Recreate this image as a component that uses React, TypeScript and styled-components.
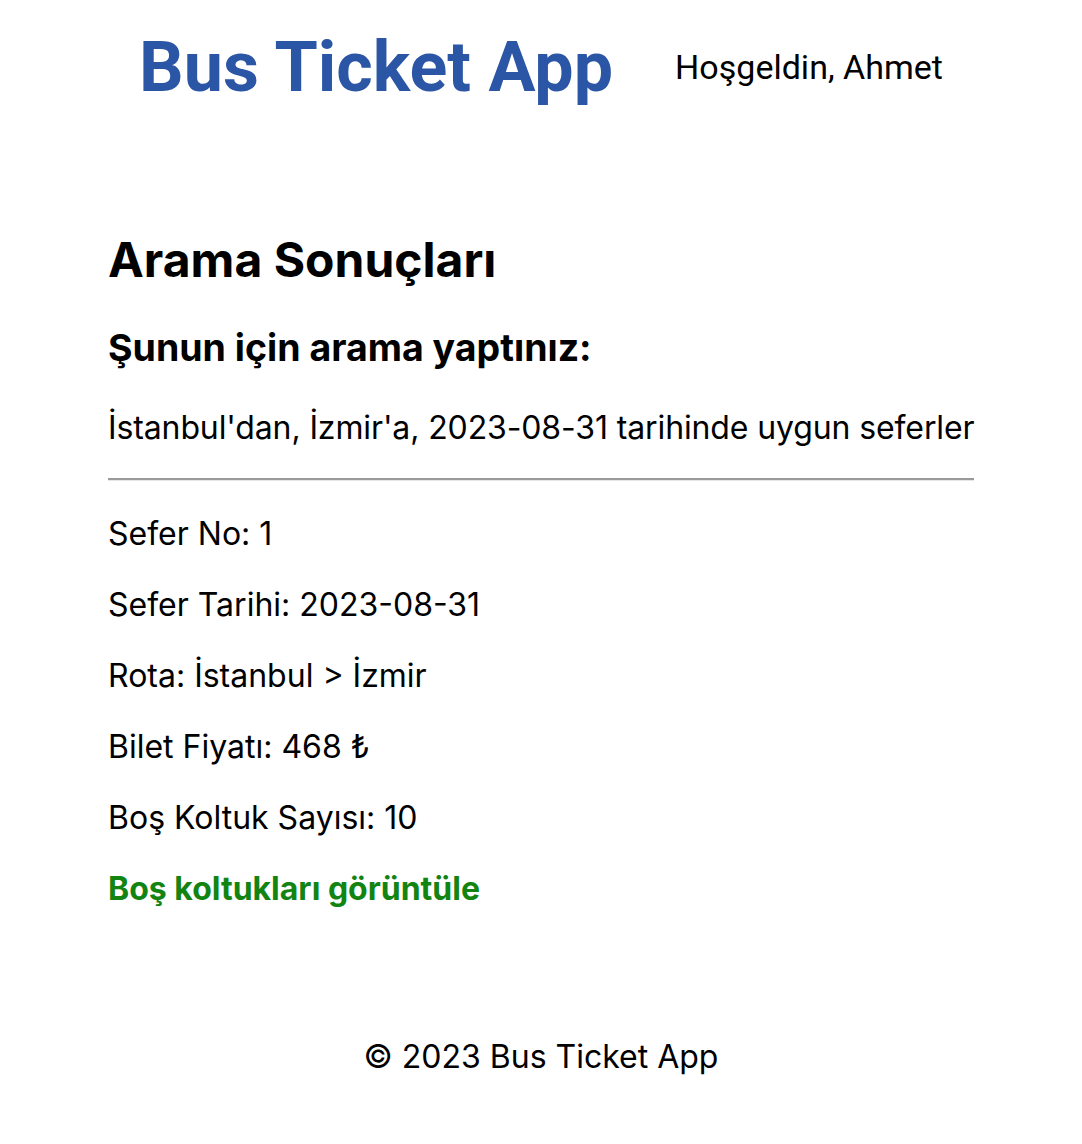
import styled, { createGlobalStyle } from 'styled-components';

const GlobalStyle = createGlobalStyle`
    body {
        margin: 0;
        background: #fff;
        color: #000;
        font-family: Inter, "Noto Sans", sans-serif;
    }
`;

const Page = styled.div`
    display: flex;
    flex-direction: column;
    min-height: 1144px;
`;

const Header = styled.header`
    display: flex;
    justify-content: center;
    align-items: center;
    gap: 62px;
    height: 134px;
    font-family: Roboto, "Liberation Sans", sans-serif;
`;

const Brand = styled.h1`
    margin: 0;
    font-size: 70px;
    font-weight: 700;
    color: #2b55a5;
`;

const Greeting = styled.span`
    font-size: 34px;
    color: #000;
`;

const Main = styled.main`
    width: 866px;
    margin: 0 auto;
    padding-top: 98px;
`;

const Title = styled.h2`
    margin: 0 0 38px;
    font-size: 48px;
    font-weight: 700;
    line-height: 56px;
`;

const SubTitle = styled.h3`
    margin: 0 0 38px;
    font-size: 37.5px;
    font-weight: 700;
    line-height: 44px;
`;

const Summary = styled.p`
    margin: 0;
    font-size: 32px;
    line-height: 40px;
    letter-spacing: -0.12px;
    white-space: nowrap;
`;

const Divider = styled.hr`
    margin: 30px 0 33px;
    border: 0;
    border-top: 2px solid #9a9a9a;
    border-bottom: 1px solid #e6e6e6;
`;

const TripList = styled.div`
    display: flex;
    flex-direction: column;
    gap: 31px;
`;

const Field = styled.p`
    margin: 0;
    font-size: 32px;
    line-height: 40px;
`;

const SeatLink = styled.a`
    font-size: 32px;
    line-height: 40px;
    font-weight: 700;
    color: #128412;
    text-decoration: none;
    cursor: pointer;
`;

const Footer = styled.footer`
    margin-top: 128px;
    text-align: center;
    font-size: 32px;
    line-height: 40px;
`;

const trip = {
    id: 1,
    date: '2023-08-31',
    from: 'İstanbul',
    to: 'İzmir',
    price: 468,
    emptySeats: 10,
};

export default function App() {
    return (
        <Page>
            <GlobalStyle />
            <Header>
                <Brand>Bus Ticket App</Brand>
                <Greeting>Hoşgeldin, Ahmet</Greeting>
            </Header>
            <Main>
                <Title>Arama Sonuçları</Title>
                <SubTitle>Şunun için arama yaptınız:</SubTitle>
                <Summary>
                    {trip.from}'dan, {trip.to}'a, {trip.date} tarihinde uygun seferler
                </Summary>
                <Divider />
                <TripList>
                    <Field>Sefer No: {trip.id}</Field>
                    <Field>Sefer Tarihi: {trip.date}</Field>
                    <Field>Rota: {trip.from} &gt; {trip.to}</Field>
                    <Field>Bilet Fiyatı: {trip.price} ₺</Field>
                    <Field>Boş Koltuk Sayısı: {trip.emptySeats}</Field>
                    <SeatLink>Boş koltukları görüntüle</SeatLink>
                </TripList>
            </Main>
            <Footer>© 2023 Bus Ticket App</Footer>
        </Page>
    );
}
